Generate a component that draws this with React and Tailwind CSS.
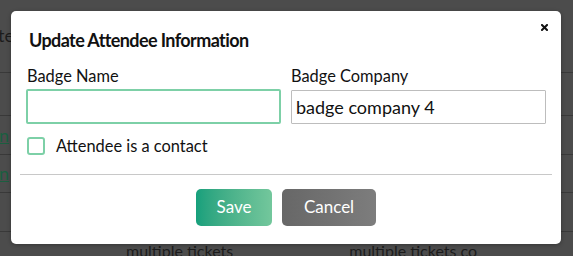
export default function App() {
  const rows = [
    { h: "h-[73px]", text: "te", link: false },
    { h: "h-[43px]", text: "", link: false },
    { h: "h-[39px]", text: "n", link: true },
    { h: "h-[38px]", text: "n", link: true },
    { h: "h-[39px]", text: "", link: false },
  ];

  return (
    <div
      className="relative w-[573px] h-[256px] overflow-hidden bg-[#4c4c4c]"
      style={{ fontFamily: "Lato, 'Noto Sans', sans-serif" }}
    >
      {/* Dimmed page behind the modal */}
      <div className="flex flex-col text-[16px] text-[#1c1c1c]">
        {rows.map((r, i) => (
          <div
            key={i}
            className={`${r.h} flex items-center border-b border-[#393939]`}
          >
            {r.link ? (
              <span className="underline text-[#1a5f40] text-[18px] -ml-[1px]">{r.text}</span>
            ) : (
              <span className="text-[18px] -ml-[2px] -mt-[1px]">{r.text}</span>
            )}
          </div>
        ))}
        <div className="flex h-[24px] pt-[7px]">
          <span className="ml-[126px]">multiple tickets</span>
          <span className="ml-[116px]">multiple tickets co</span>
        </div>
      </div>

      {/* Modal */}
      <div className="absolute left-[11px] top-[11px] w-[550px] h-[233px] bg-white rounded-[5px] shadow-[0_1px_4px_rgba(0,0,0,0.3)]">
        <button className="absolute right-[13px] top-[13px] w-[7px] h-[7px] flex items-center justify-center">
          <svg width="7" height="7" viewBox="0 0 7 7">
            <path d="M1 1L6 6M6 1L1 6" stroke="#111" strokeWidth="2" strokeLinecap="square" />
          </svg>
        </button>

        <div className="px-[15px] pt-[17px]">
          <h2 className="ml-[3px] text-[18px] leading-[24px] font-bold tracking-[-0.6px] text-[#111]">
            Update Attendee Information
          </h2>

          <div className="grid grid-cols-2 gap-[10px] mt-[14px]">
            <div>
              <label className="block ml-[1px] text-[16.4px] leading-[20px] text-[#111]">Badge Name</label>
              <div className="mt-[3px] h-[35px] border-2 border-[#7dd0a7] rounded-[2px]" />
            </div>
            <div>
              <label className="block text-[16.4px] leading-[20px] text-[#111]">Badge Company</label>
              <div className="mt-[4px] h-[34px] border border-[#bdbdbd] rounded-[1px] flex items-center px-[4px] text-[18px] text-[#111]">
                badge company 4
              </div>
            </div>
          </div>

          <div className="flex items-center mt-[10px] ml-[1px]">
            <span className="w-[18px] h-[18px] border-2 border-[#7dd0a7] rounded-[3px]" />
            <span className="ml-[11px] text-[16.4px] text-[#111]">Attendee is a contact</span>
          </div>
        </div>

        <div className="mx-[9px] mt-[15px] border-t border-[#c8c8c8]" />

        <div className="flex justify-center gap-[10px] mt-[14px]">
          <button className="w-[76px] h-[37px] rounded-[5px] bg-gradient-to-r from-[#15a07c] to-[#73c79c] text-white text-[17px]">
            Save
          </button>
          <button className="w-[94px] h-[37px] rounded-[5px] bg-gradient-to-r from-[#676767] to-[#7d7d7d] text-white text-[17px]">
            Cancel
          </button>
        </div>
      </div>
    </div>
  );
}
